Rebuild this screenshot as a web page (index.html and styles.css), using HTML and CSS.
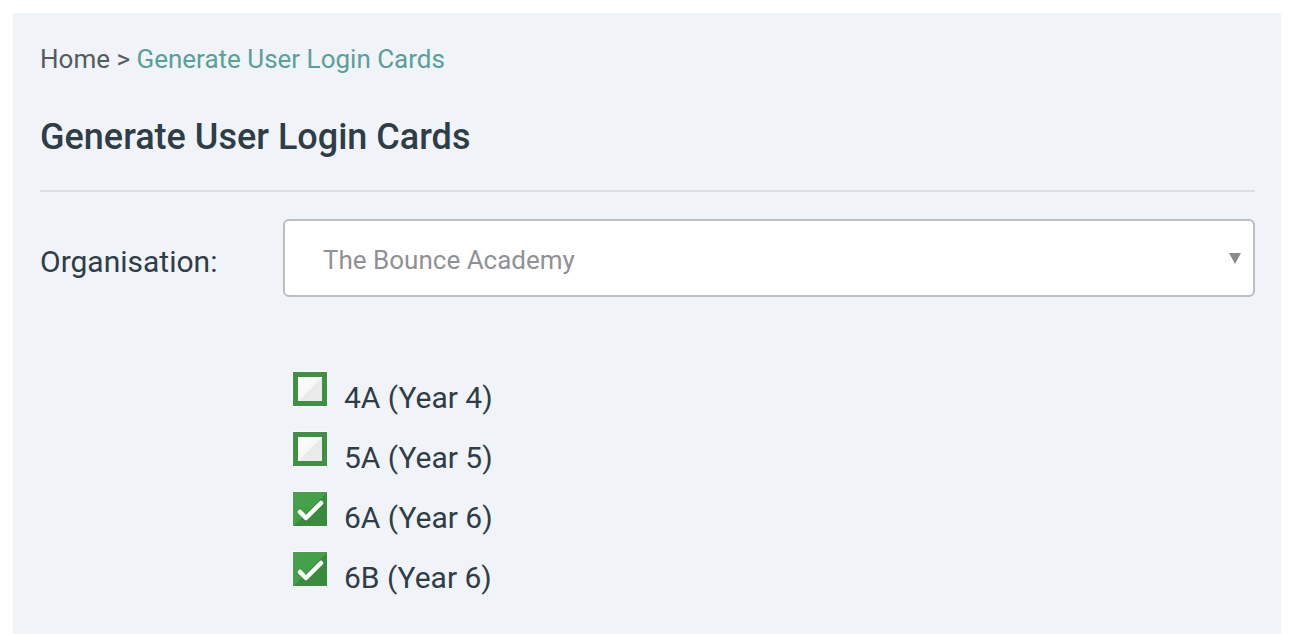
FILE: index.html
```html
<!DOCTYPE html>
<html>
<head>
<meta charset="utf-8">
<link rel="stylesheet" href="styles.css">
</head>
<body>
<div class="page">
  <div class="panel">
    <div class="breadcrumb"><span class="home">Home &gt; </span><a class="crumb-link">Generate User Login Cards</a></div>
    <h1 class="title">Generate User Login Cards</h1>
    <hr class="divider">
    <div class="form-row">
      <label class="label">Organisation:</label>
      <div class="select">
        <span class="select-text">The Bounce Academy</span>
        <span class="arrow"></span>
      </div>
    </div>
    <ul class="classes">
      <li class="item"><span class="box"></span><span class="item-text">4A (Year 4)</span></li>
      <li class="item"><span class="box"></span><span class="item-text">5A (Year 5)</span></li>
      <li class="item"><span class="box checked"><svg viewBox="0 0 34 34" width="34" height="34"><path d="M7 20 L13 26 L28 11" fill="none" stroke="#fff" stroke-width="4.5" stroke-linecap="round" stroke-linejoin="round"/></svg></span><span class="item-text">6A (Year 6)</span></li>
      <li class="item"><span class="box checked"><svg viewBox="0 0 34 34" width="34" height="34"><path d="M7 20 L13 26 L28 11" fill="none" stroke="#fff" stroke-width="4.5" stroke-linecap="round" stroke-linejoin="round"/></svg></span><span class="item-text">6B (Year 6)</span></li>
    </ul>
  </div>
</div>
</body>
</html>
```

FILE: styles.css
```css
* { box-sizing: border-box; }
html, body { margin: 0; padding: 0; background: #ffffff; }
body { font-family: Roboto, "Liberation Sans", sans-serif; color: #2f3d47; }
.page { padding: 13px 25px 0 13px; height: 634px; overflow: hidden; }
.panel { background: #f0f4f8; padding: 31px 26px 40px 27px; height: 621px; }
.breadcrumb { font-size: 26px; line-height: 30px; }
.home { color: #555b60; }
.crumb-link { color: #5a9f98; text-decoration: none; }
.title { margin: 42px 0 0 0; font-size: 36px; line-height: 42px; font-weight: 500; color: #2f3d47; }
.divider { margin: 32px 0 0 0; border: 0; height: 2px; background: #dcdfe2; }
.form-row { display: flex; align-items: center; margin-top: 27px; }
.label { width: 243px; flex: none; font-size: 30px; color: #2f3d47; padding-top: 6px; }
.select { flex: 1; height: 78px; border: 2px solid #babec5; border-radius: 6px; background: #fff; display: flex; align-items: center; padding: 0 0 0 38px; position: relative; }
.select-text { font-size: 26px; color: #8f9194; padding-top: 3px; }
.arrow { position: absolute; right: 12px; top: 32px; width: 0; height: 0; border-left: 6px solid transparent; border-right: 6px solid transparent; border-top: 11px solid #8a8a8a; }
.classes { list-style: none; margin: 70px 0 0 0; padding: 0 0 0 252px; }
.item { display: flex; align-items: flex-start; height: 60px; }
.box { width: 36px; height: 36px; flex: none; margin-top: 4px; border: 1px solid #fff; background: #3e9142; padding: 5px; display: flex; }
.box::before { content: ""; flex: 1; background: linear-gradient(135deg, #ffffff 0%, #f7f7f7 50%, #eaeaea 51%, #ececec 100%); }
.box.checked { padding: 0; background: linear-gradient(135deg, #47a24b 0%, #43a047 50%, #3a8b3e 51%, #388a3c 100%); }
.box.checked::before { display: none; }
.box svg { display: block; }
.item-text { align-self: center; margin-left: 16px; font-size: 30px; color: #2f3d47; }
```
